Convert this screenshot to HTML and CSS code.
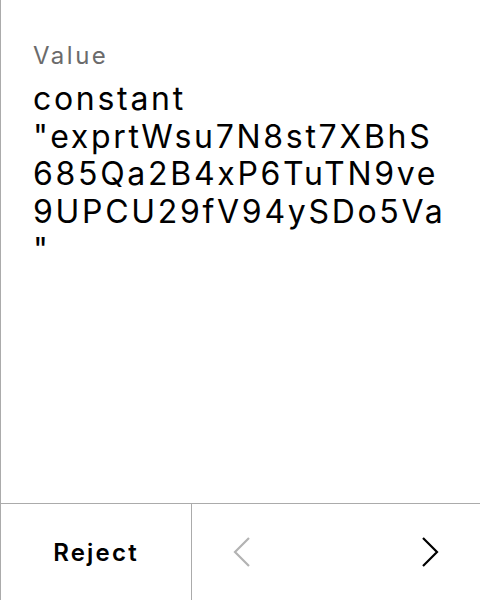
FILE: index.html
```html
<!DOCTYPE html>
<html>
<head>
<meta charset="utf-8">
<link rel="stylesheet" href="styles.css">
</head>
<body>
<div class="panel">
  <div class="content">
    <div class="label">Value</div>
    <div class="value">constant "exprtWsu7N8st7XBhS685Qa2B4xP6TuTN9ve9UPCU29fV94ySDo5Va"</div>
  </div>
  <div class="footer">
    <button class="reject">Reject</button>
    <div class="nav">
      <button class="nav-btn disabled" aria-label="Previous">
        <svg width="18" height="32" viewBox="0 0 18 32"><path d="M16 2 L2 16 L16 30" fill="none" stroke="currentColor" stroke-width="2.2"/></svg>
      </button>
      <button class="nav-btn" aria-label="Next">
        <svg width="18" height="32" viewBox="0 0 18 32"><path d="M2 2 L16 16 L2 30" fill="none" stroke="currentColor" stroke-width="2.2"/></svg>
      </button>
    </div>
  </div>
</div>
</body>
</html>
```

FILE: styles.css
```css
html, body {
  margin: 0;
  padding: 0;
  background: #fff;
}
body {
  font-family: Inter, "Noto Sans", sans-serif;
  color: #000;
}
.panel {
  box-sizing: border-box;
  height: 600px;
  border-left: 1px solid #ababab;
  display: flex;
  flex-direction: column;
}
.content {
  flex: 1;
  padding: 40px 30px 0 32px;
}
.label {
  font-size: 24px;
  line-height: 32px;
  letter-spacing: 2.5px;
  color: #6b6b6b;
}
.value {
  margin-top: 8px;
  font-size: 32px;
  line-height: 37.7px;
  letter-spacing: 2.7px;
  overflow-wrap: anywhere;
}
.footer {
  height: 96px;
  border-top: 1px solid #ababab;
  display: flex;
}
button {
  font-family: inherit;
  background: none;
  border: none;
  padding: 0;
  margin: 0;
  cursor: pointer;
}
.reject {
  width: 191px;
  border-right: 1px solid #ababab;
  font-size: 24px;
  font-weight: 600;
  letter-spacing: 2.2px;
  color: #000;
}
.nav {
  flex: 1;
  display: flex;
  justify-content: space-between;
  align-items: center;
  padding: 0 41px;
}
.nav-btn {
  color: #000;
  display: flex;
  align-items: center;
}
.nav-btn.disabled {
  color: #b3b3b3;
}
```
